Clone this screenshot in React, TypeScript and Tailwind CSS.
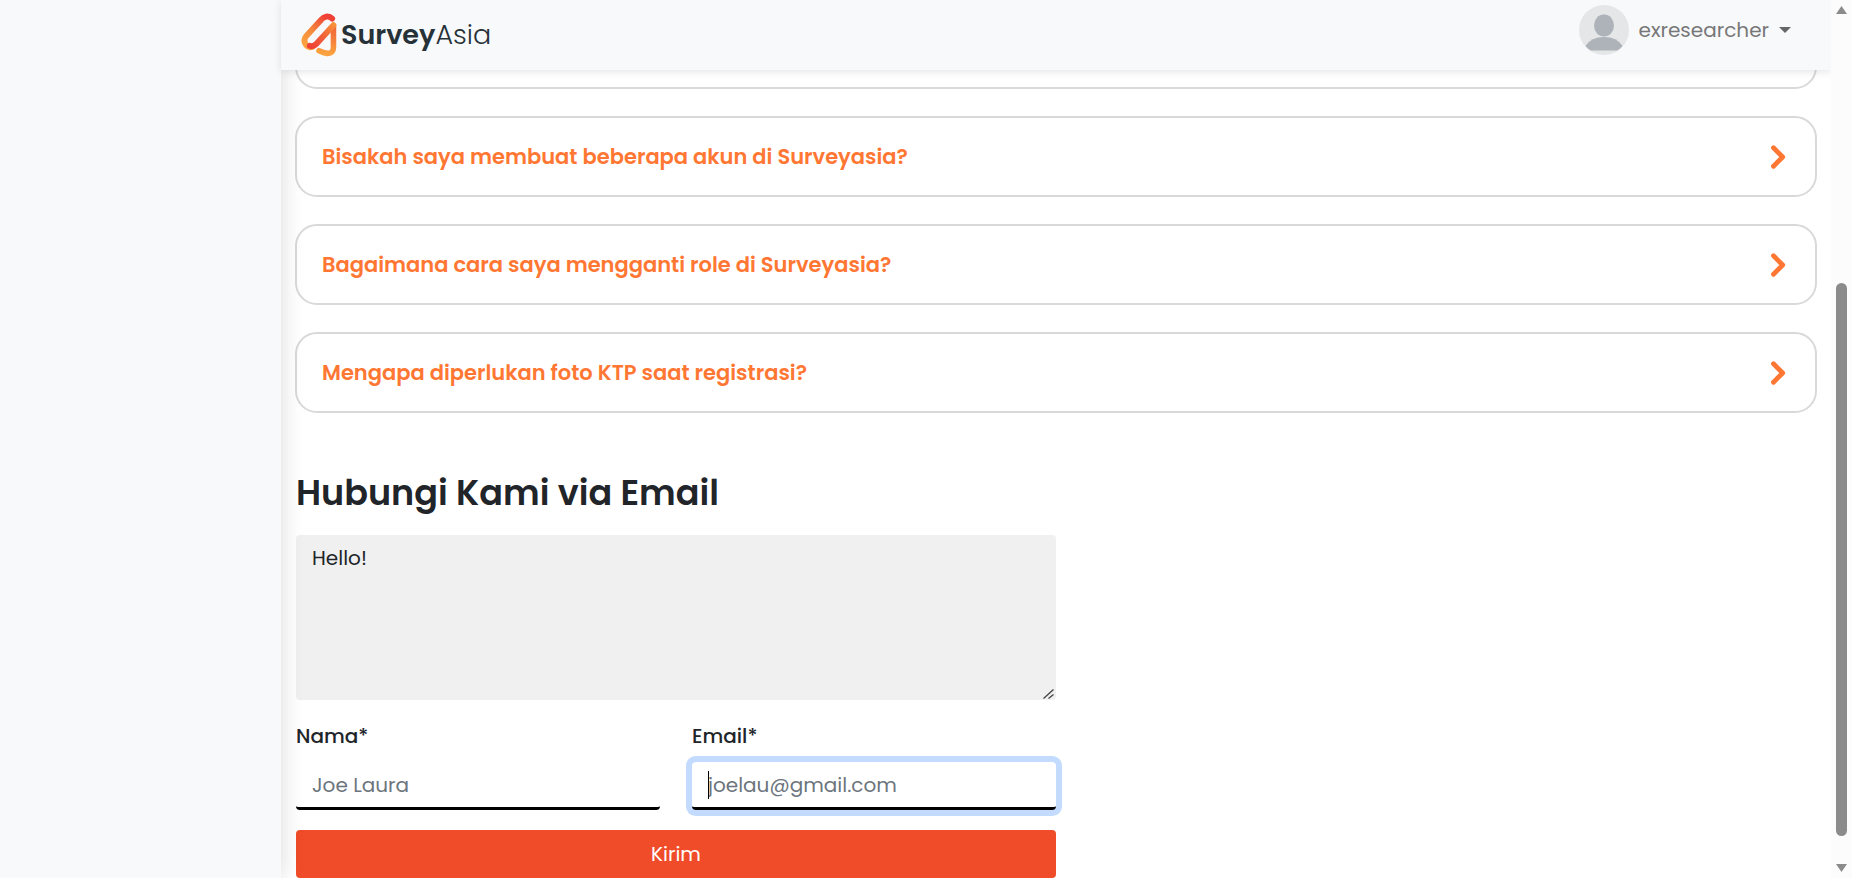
const questions = [
  "Bisakah saya membuat beberapa akun di Surveyasia?",
  "Bagaimana cara saya mengganti role di Surveyasia?",
  "Mengapa diperlukan foto KTP saat registrasi?",
];

function LogoMark() {
  return (
    <svg viewBox="92 37 108 134" className="h-11 w-9" fill="none" strokeLinecap="round" strokeLinejoin="round" aria-hidden="true">
      <defs>
        <linearGradient id="loop" gradientUnits="userSpaceOnUse" x1="180" y1="45" x2="105" y2="135">
          <stop offset="0.1" stopColor="#ef4136" />
          <stop offset="0.6" stopColor="#f58a3c" />
          <stop offset="1" stopColor="#fba13f" />
        </linearGradient>
        <linearGradient id="bar" gradientUnits="userSpaceOnUse" x1="190" y1="72" x2="120" y2="142">
          <stop offset="0" stopColor="#f9903a" />
          <stop offset="0.5" stopColor="#f0603a" />
          <stop offset="1" stopColor="#ef4136" />
        </linearGradient>
        <linearGradient id="side" gradientUnits="userSpaceOnUse" x1="190" y1="75" x2="180" y2="160">
          <stop offset="0" stopColor="#f0643a" />
          <stop offset="0.5" stopColor="#f57f3c" />
          <stop offset="1" stopColor="#fba13f" />
        </linearGradient>
      </defs>
      <path d="M190 78V142Q190 161 171 160Q160 159 146 152" stroke="url(#side)" strokeWidth="17" />
      <path d="M186 54Q178 46 168 48Q159 50 152 58L108 106Q97 119 105 132Q113 144 126 140" stroke="url(#loop)" strokeWidth="18" />
      <path d="M118 137Q128 141 139 130L190 74" stroke="url(#bar)" strokeWidth="18" />
    </svg>
  );
}

function Avatar() {
  return (
    <svg viewBox="0 0 50 50" className="size-[50px]" aria-hidden="true">
      <circle cx="25" cy="25" r="25" fill="#e4e6e8" />
      <ellipse cx="25" cy="20.500" rx="10" ry="11" fill="#adb3b8" />
      <path d="M6.500 41Q12 32 25 32Q38 32 43.500 41Q41 44 38 45.500H12Q9 44 6.500 41Z" fill="#adb3b8" />
    </svg>
  );
}

function Chevron() {
  return (
    <svg viewBox="0 0 16 24" className="h-6 w-4" fill="none" stroke="#ff7733" strokeWidth="4.800" strokeLinecap="round" strokeLinejoin="round" aria-hidden="true">
      <path d="M3.500 2.800L12.700 12L3.500 21.200" />
    </svg>
  );
}

const inputClass =
  "h-12 w-full rounded border-b-3 border-black bg-white px-4 text-xl text-[#212529] outline-none placeholder:text-[#6c757d] focus:ring-6 focus:ring-[#c2dbfe]";

export default function App() {
  return (
    <div className="flex h-screen overflow-hidden bg-white font-['Poppins','Inter',sans-serif] text-[#212529]">
      <aside className="z-10 w-[281px] shrink-0 bg-[#f8f9fb] shadow-[0_0_22px_rgba(0,0,0,0.15)]" />

      <div className="flex min-w-0 flex-1 flex-col">
        <header className="z-20 flex h-[70px] shrink-0 items-center justify-between bg-[#f8f9fb] pr-10 pl-5 shadow-[0_2px_8px_rgba(0,0,0,0.1)]">
          <a href="#" className="flex items-center gap-1 text-[27px] leading-9 text-[#263238]">
            <LogoMark />
            <span>
              <span className="font-semibold">Survey</span>
              <span className="font-light">Asia</span>
            </span>
          </a>
          <button type="button" className="mb-2.5 flex items-center gap-2.5 text-xl text-[#777]">
            <Avatar />
            exresearcher
            <svg viewBox="0 0 12 6" className="h-1.5 w-3" fill="#666" aria-hidden="true">
              <path d="M0 0H12L6 6Z" />
            </svg>
          </button>
        </header>

        <main className="flex min-h-0 flex-1 flex-col overflow-hidden px-3.5">
          <section className="flex shrink-0 flex-col gap-[27px]">
            <div className="-mt-[62px] h-[81px] rounded-[22px] border-2 border-[#d9d9d9]" />
            {questions.map((question) => (
              <button
                key={question}
                type="button"
                className="flex h-[81px] items-center justify-between rounded-[22px] border-2 border-[#d9d9d9] pr-[29px] pl-[25px] text-left text-[21px] font-semibold text-[#ff7733]"
              >
                {question}
                <Chevron />
              </button>
            ))}
          </section>

          <form className="mt-14 flex w-1/2 shrink-0 flex-col pl-px" onSubmit={(event) => event.preventDefault()}>
            <h2 className="text-[35px] leading-12 font-semibold">Hubungi Kami via Email</h2>
            <div className="relative mt-[18px]">
              <textarea
                aria-label="Pesan"
                defaultValue="Hello!"
                className="block h-[165px] w-full resize-none rounded bg-[#f0f0f0] px-4 py-[9px] text-xl outline-none"
              />
              <svg viewBox="0 0 11 10" className="absolute right-0.5 bottom-px h-2.5 w-[11px]" fill="none" stroke="#444" strokeWidth="1.300" aria-hidden="true">
                <path d="M0.500 9.500L10.500 0.500M5.500 9.500L10.500 5.500" />
              </svg>
            </div>
            <div className="mt-[21px] grid grid-cols-2 gap-8">
              <div>
                <label htmlFor="nama" className="mb-[11px] block text-xl leading-[30px] font-medium">Nama*</label>
                <input id="nama" type="text" placeholder="Joe Laura" className={inputClass} />
              </div>
              <div>
                <label htmlFor="email" className="mb-[11px] block text-xl leading-[30px] font-medium">Email*</label>
                <div className="relative">
                  <input id="email" type="email" placeholder="joelau@gmail.com" autoFocus className={`${inputClass} caret-transparent`} />
                  <span className="absolute top-[9px] left-4 h-7 w-px bg-black" aria-hidden="true" />
                </div>
              </div>
            </div>
            <button type="submit" className="mt-5 h-12 rounded bg-[#f04c29] text-xl text-white">Kirim</button>
          </form>
        </main>
      </div>

      <div className="z-20 flex w-[21px] shrink-0 flex-col items-center bg-[#fcfcfc] py-1.5" aria-hidden="true">
        <svg viewBox="0 0 11 8" className="h-2 w-[11px]" fill="#8b8b8b"><path d="M5.500 0L11 8H0Z" /></svg>
        <div className="flex-[269]" />
        <div className="w-[11px] flex-[553] rounded-full bg-[#8b8b8b]" />
        <div className="flex-[28]" />
        <svg viewBox="0 0 11 8" className="h-2 w-[11px]" fill="#8b8b8b"><path d="M0 0H11L5.500 8Z" /></svg>
      </div>
    </div>
  );
}
